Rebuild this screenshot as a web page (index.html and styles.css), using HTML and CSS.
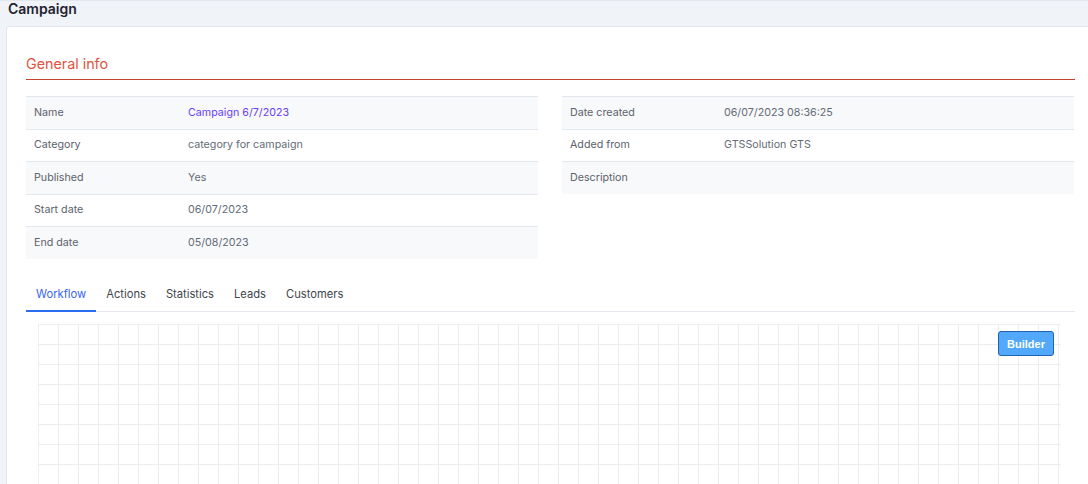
FILE: index.html
```html
<!DOCTYPE html>
<html>
<head>
<meta charset="utf-8">
<link rel="stylesheet" href="styles.css">
</head>
<body>
<div class="page">
  <div class="page-title">Campaign</div>
  <div class="card">
    <h2 class="section-title">General info</h2>
    <div class="info">
      <table class="info-table">
        <tr><td class="lbl">Name</td><td class="val link">Campaign 6/7/2023</td></tr>
        <tr><td class="lbl">Category</td><td class="val">category for campaign</td></tr>
        <tr><td class="lbl">Published</td><td class="val">Yes</td></tr>
        <tr><td class="lbl">Start date</td><td class="val">06/07/2023</td></tr>
        <tr><td class="lbl">End date</td><td class="val">05/08/2023</td></tr>
      </table>
      <table class="info-table">
        <tr><td class="lbl">Date created</td><td class="val">06/07/2023 08:36:25</td></tr>
        <tr><td class="lbl">Added from</td><td class="val">GTSSolution GTS</td></tr>
        <tr><td class="lbl">Description</td><td class="val"></td></tr>
      </table>
    </div>
    <div class="tabs">
      <div class="tab active">Workflow</div>
      <div class="tab">Actions</div>
      <div class="tab">Statistics</div>
      <div class="tab">Leads</div>
      <div class="tab">Customers</div>
    </div>
    <div class="canvas">
      <button class="builder">Builder</button>
    </div>
  </div>
</div>
</body>
</html>
```
FILE: styles.css
```css
* { box-sizing: border-box; }
html, body { margin: 0; padding: 0; }
body {
  background: #f0f3f8;
  font-family: Inter, "Noto Sans", sans-serif;
  color: #333;
  overflow: hidden;
}
.page {
  border-top: 1px solid #e3e7ee;
  height: 484px;
  overflow: hidden;
}
.page-title {
  font-size: 14px;
  font-weight: 600;
  color: #1f2430;
  padding: 0 0 0 8px;
  line-height: 16px;
  height: 25px;
}
.card {
  margin-left: 6px;
  background: #fff;
  border: 1px solid #e1e6ee;
  border-right: none;
  border-radius: 4px 0 0 0;
  padding: 23px 13px 0 19px;
  height: 480px;
}
.section-title {
  margin: 0;
  font-size: 14.3px;
  font-weight: 400;
  color: #e0533f;
  line-height: 27px;
  padding-bottom: 2px;
  border-bottom: 1px solid #c9412f;
}
.info {
  display: grid;
  grid-template-columns: 512px 512px;
  column-gap: 24px;
  margin-top: 16px;
  align-items: start;
}
.info-table {
  border-collapse: collapse;
  width: 100%;
  font-size: 10.7px;
}
.info-table tr { height: 32.5px; border-top: 1px solid #e3e8ef; }
.info-table tr:nth-child(odd) { background: #f8f9fb; }
.info-table td { padding: 0 8px 1px; color: #646b76; vertical-align: middle; }
.info-table td.lbl { width: 154px; color: #5c626c; }
.info-table td.link { color: #6a3df5; }
.tabs {
  display: flex;
  margin-top: 20px;
  border-bottom: 1px solid #e5e8ee;
  font-size: 11.2px;
}
.tab {
  padding: 0 10px;
  height: 33px;
  line-height: 30px;
  color: #41454d;
  margin-bottom: -1px;
  border-bottom: 2px solid transparent;
}
.tab.active {
  color: #3a63f0;
  border-bottom-color: #2c6cf0;
}
.canvas {
  position: relative;
  margin: 12px 0 0 12px;
  width: 1023px;
  height: 200px;
  border-top: 1px solid #eeeeee;
  border-left: 1px solid #eeeeee;
  background-color: #fff;
  background-image:
    linear-gradient(to right, #ededed 1px, transparent 1px),
    linear-gradient(to bottom, #ededed 1px, transparent 1px);
  background-size: 20px 20px;
  background-position: 19px 19px;
}
.builder {
  position: absolute;
  top: 6px;
  left: 959px;
  width: 56px;
  height: 25px;
  background: #52a8fb;
  border: 1px solid #1f62ad;
  border-radius: 3px;
  color: #fff;
  font-family: "Liberation Sans", Arial, sans-serif;
  font-weight: 700;
  font-size: 11px;
  padding: 0;
}
```
